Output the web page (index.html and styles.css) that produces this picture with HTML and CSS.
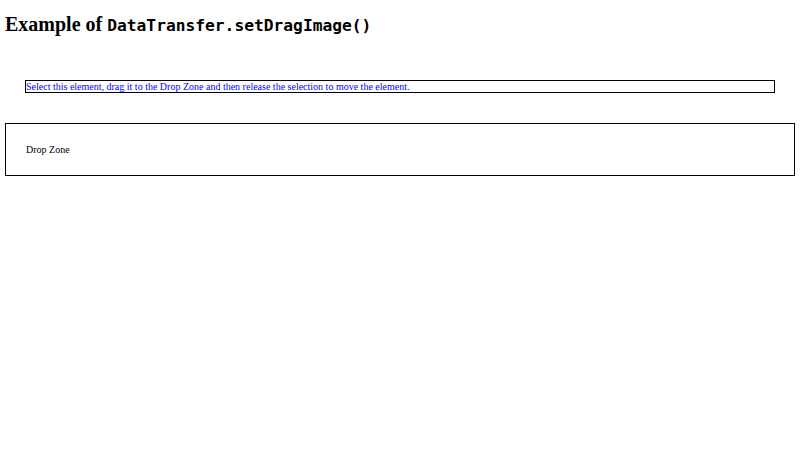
FILE: index.html
```html
<!DOCTYPE html>
<html lang="en">
<head>
    <meta charset="UTF-8">
    <title>setDragImage example</title>
    <link rel="stylesheet" href="styles.css">
</head>
<body>
<h1>Example of <code>DataTransfer.setDragImage()</code></h1>
<div class="box">
    <p id="source" draggable="true">Select this element, drag it to the Drop Zone and then release the selection to move the element.</p>
</div>
<div class="box" id="target">Drop Zone</div>
</body>
</html>
```

FILE: styles.css
```css
body {
    margin: 5px;
    font-family: "Liberation Serif", serif;
    font-size: 10px;
    color: #000;
}

h1 {
    font-size: 20px;
    margin: 8.4px 0 13.4px;
}

code {
    font-family: "DejaVu Sans Mono", monospace;
    font-size: 16.25px;
    font-weight: bold;
}

.box {
    margin: 0;
    padding: 20px;
}

#source {
    margin: 10px 0;
    color: blue;
    border: 1px solid black;
}

#target {
    border: 1px solid black;
}
```
